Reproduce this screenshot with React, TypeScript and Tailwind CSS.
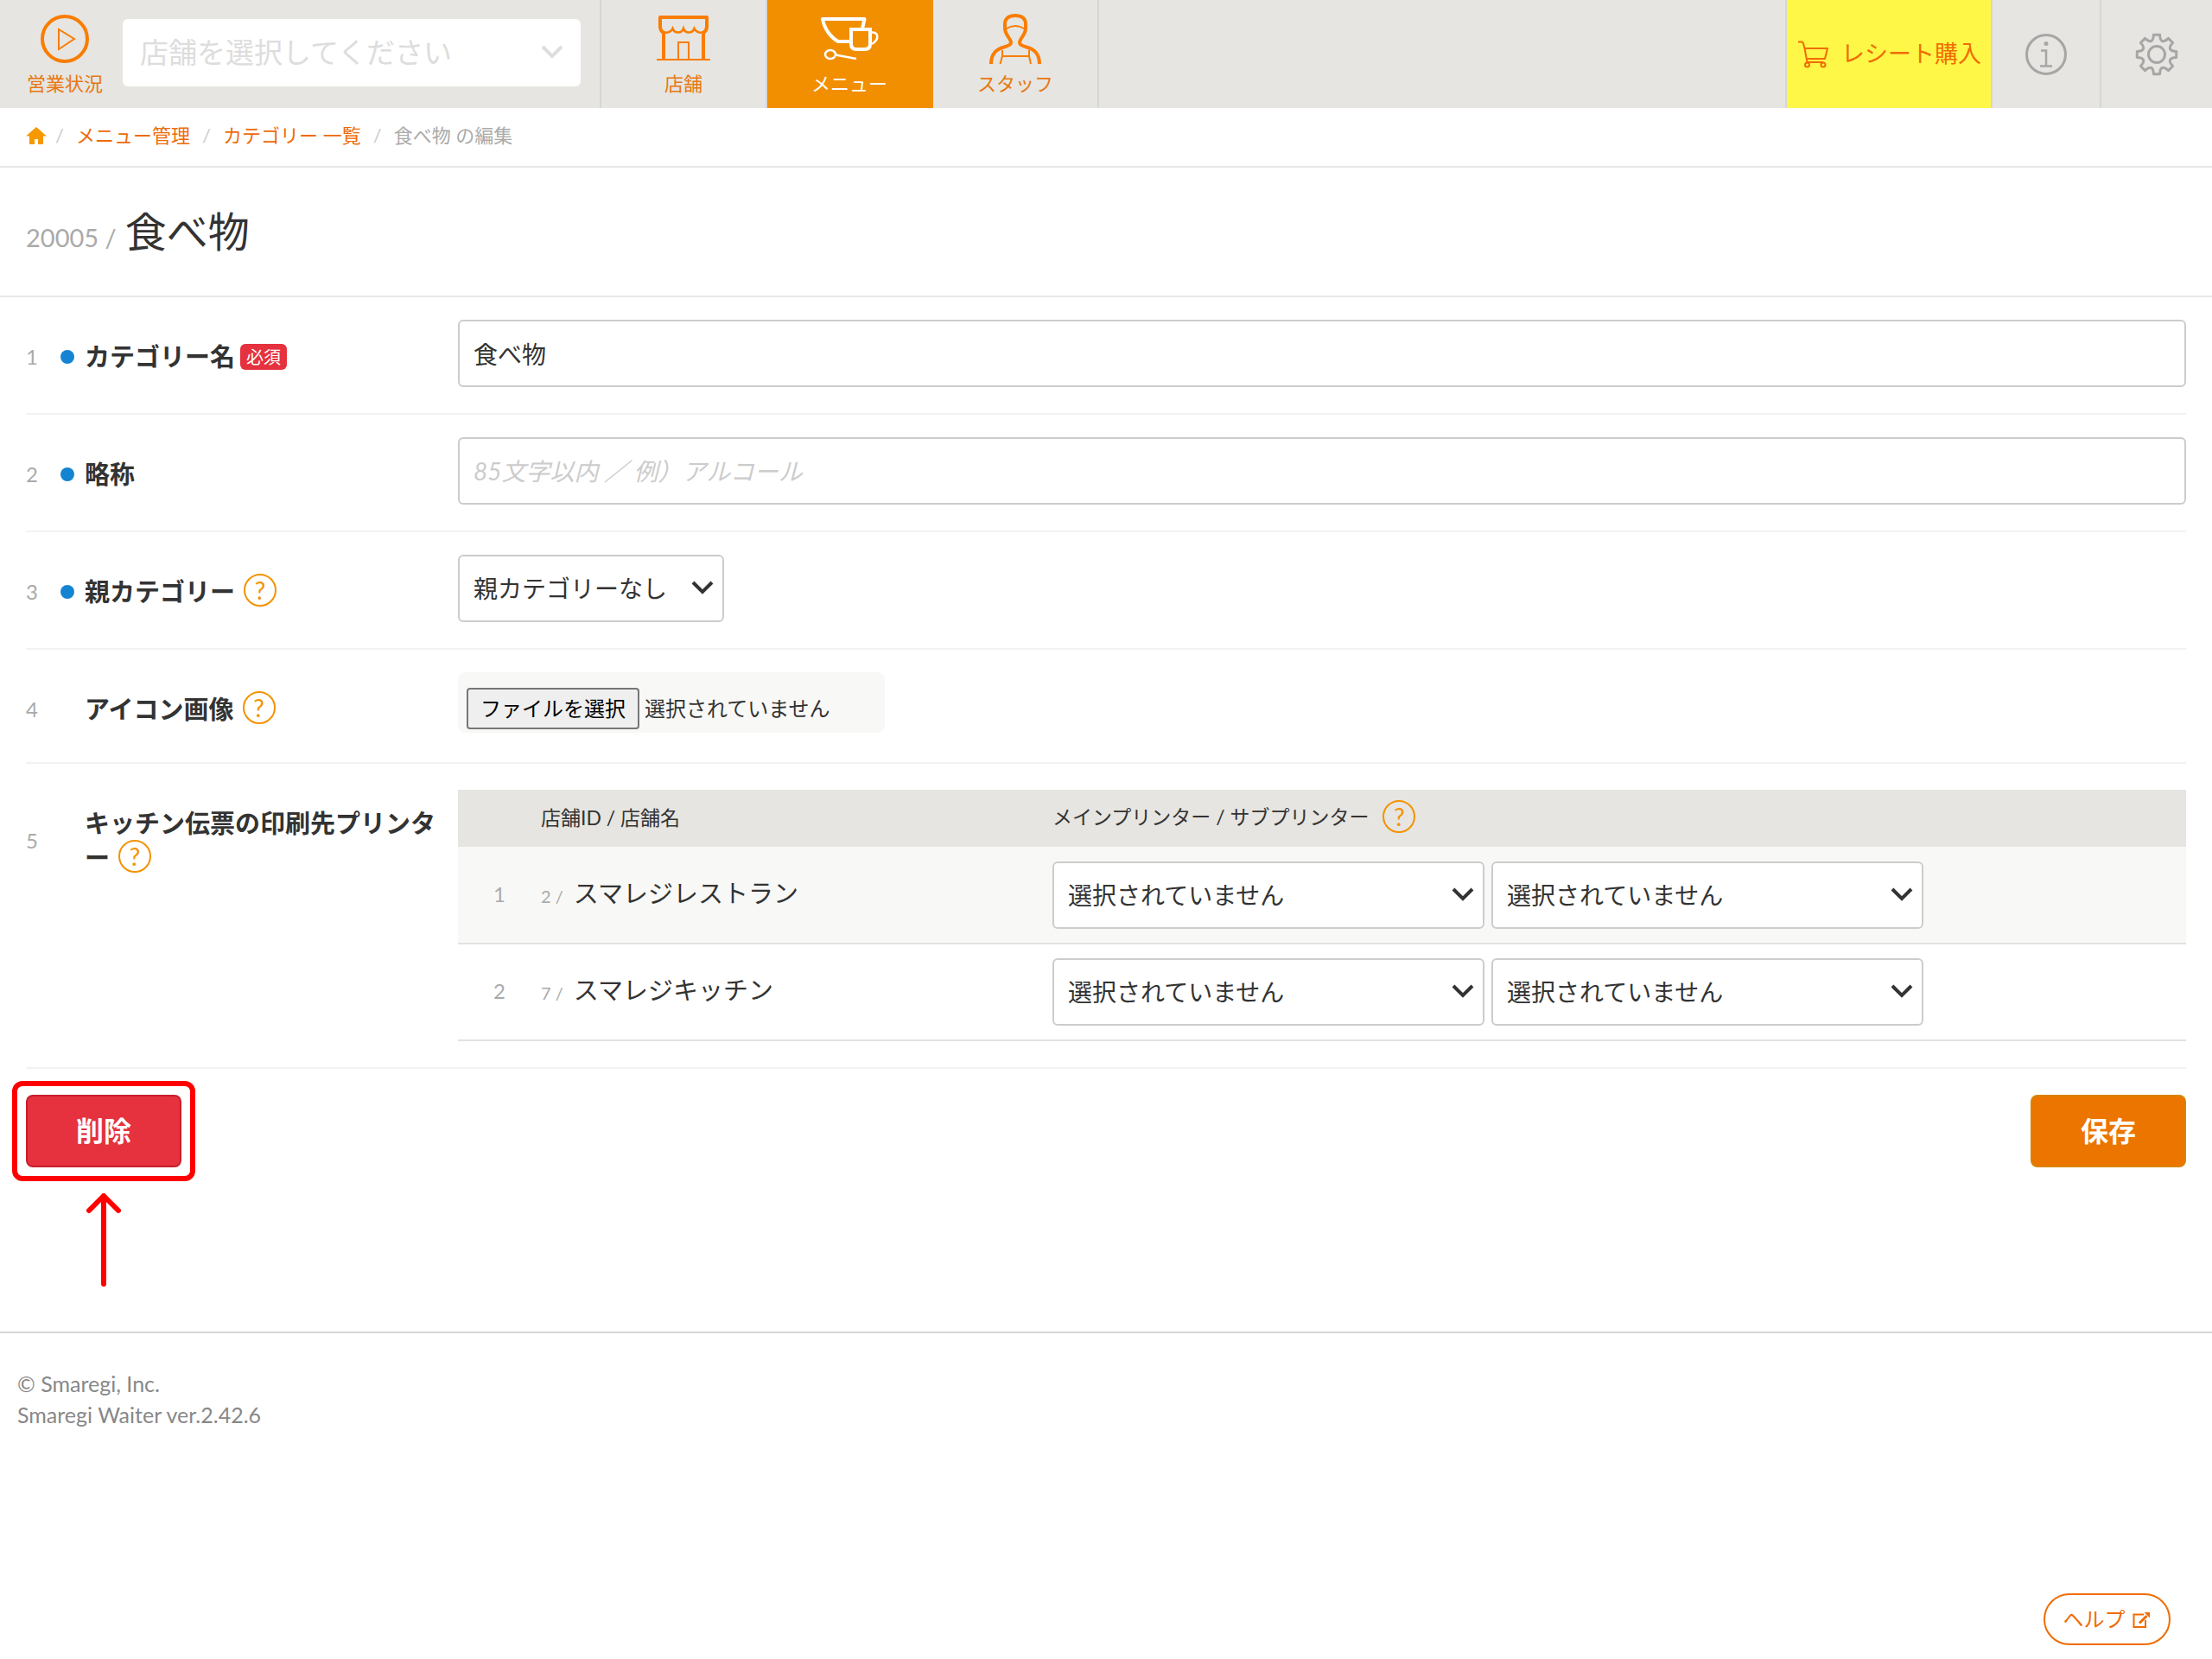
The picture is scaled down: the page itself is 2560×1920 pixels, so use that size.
import type { ReactNode } from "react"

const breadcrumbs = [
  { label: "メニュー管理", href: "#menu" },
  { label: "カテゴリー 一覧", href: "#categories" },
]

const stores = [
  { id: 2, name: "スマレジレストラン" },
  { id: 7, name: "スマレジキッチン" },
]

// Outline of an eight-tooth cog centred on the origin
const gearPath = () => {
  const point = (deg: number, r: number) => {
    const rad = ((deg - 90) * Math.PI) / 180
    return `${(r * Math.cos(rad)).toFixed(2)} ${(r * Math.sin(rad)).toFixed(2)}`
  }
  let d = `M${point(-9, 23)}`
  for (let k = 0; k < 8; k++) {
    const a = k * 45
    d += ` L${point(a + 9, 23)} C${point(a + 15, 15)} ${point(a + 30, 15)} ${point(a + 36, 23)}`
  }
  return d + "Z"
}

const PlayIcon = () => (
  <svg className="h-14 w-14" viewBox="0 0 56 56" fill="none" stroke="#f97d00" aria-hidden="true">
    <circle cx="28" cy="28" r="26" strokeWidth="4" />
    <path d="M21 17v23l18-12z" strokeWidth="2" />
  </svg>
)

const StoreIcon = () => (
  <svg className="h-[56px] w-[62px]" viewBox="0 0 62 56" fill="none" stroke="#f97d00" aria-hidden="true">
    <path d="M8 51V21C5 19 4 17 4 14V3h54v11c0 3-1 5-4 7v30" strokeWidth="4" strokeLinejoin="round" />
    <path d="M6 19c4 3 10 2 12.500-3 2 6 10.500 6 12.500 0 2 6 10.500 6 12.500 0 2.500 5 8.500 6 12.500 3" strokeWidth="2.500" />
    <path d="M0 52h62M25 52V32h12v20" strokeWidth="2" />
  </svg>
)

const MenuIcon = () => (
  <svg className="h-[56px] w-[72px]" viewBox="0 0 72 56" fill="none" stroke="#fff" aria-hidden="true">
    <path d="M38 31H23C14 26 7 16 5 5h48.500l-2.500 11" strokeWidth="4" strokeLinejoin="round" />
    <path d="M38 17h22v17c0 4-2 6-6 6H44c-4 0-6-2-6-6z" strokeWidth="4" />
    <path d="M61 20.500c9-1 10 8 1 13.500" strokeWidth="2.500" />
    <ellipse cx="14" cy="46" rx="6" ry="5" strokeWidth="2.500" />
    <path d="M20 46.500L44 51" strokeWidth="2.500" />
  </svg>
)

const StaffIcon = () => (
  <svg className="h-[60px] w-[62px]" viewBox="0 0 62 60" fill="none" stroke="#f97d00" aria-hidden="true">
    <path
      d="M3 59C3 47 9 42 18 39.500c6-2 10-3 7-8.500-3-5-6-8-6-13v-5C19 6 24 3 31 3s12 3 12 10v5c0 5-3 8-6 13-3 5.500 1 6.500 7 8.500 9 2.500 15 7.500 15 19.500"
      strokeWidth="4"
    />
    <path d="M20 18.500Q31 11.500 42 18.500M16 43v7l-2.500 9M47 43v7l2 9M16 50h31" strokeWidth="2" />
  </svg>
)

const CartIcon = () => (
  <svg className="h-[36px] w-[38px]" viewBox="0 0 38 36" fill="none" stroke="#f06c00" strokeWidth="2" strokeLinejoin="round" aria-hidden="true">
    <path d="M2 3.500h4.500L8 5l1.500 6H36l-3 12H11.500M9.500 11l3 16H31" />
    <circle cx="12.500" cy="30" r="2.500" />
    <circle cx="31" cy="30" r="2.500" />
  </svg>
)

const InfoIcon = () => (
  <svg className="h-[50px] w-[50px]" viewBox="-25 -25 50 50" fill="none" stroke="#a6a6a6" aria-hidden="true">
    <circle r="22.500" strokeWidth="3" />
    <circle cy="-12.500" r="2.500" fill="#a6a6a6" stroke="none" />
    <path d="M-6-4.500H0V13.500M-7 13.500H7" strokeWidth="2.500" />
  </svg>
)

const GearIcon = () => (
  <svg className="h-[50px] w-[50px]" viewBox="-25 -25 50 50" fill="none" stroke="#a6a6a6" strokeWidth="3" strokeLinejoin="round" aria-hidden="true">
    <path d={gearPath()} />
    <circle r="9.500" />
  </svg>
)

const HomeIcon = () => (
  <svg className="h-5 w-6" viewBox="0 0 24 20" fill="#f79800" aria-hidden="true">
    <path d="M12 0l12 10.500h-4V20h-6v-6h-4v6H4v-9.500H0z" />
  </svg>
)

const ExternalIcon = () => (
  <svg className="h-[22px] w-[24px]" viewBox="0 0 24 22" fill="none" stroke="#f06c00" strokeWidth="2" aria-hidden="true">
    <path d="M15 5.500H3.500V20H17v-8" />
    <path d="M10 15.500l8.500-8.500" strokeWidth="3" />
    <path d="M15.500 3H22v6.500z" fill="#f06c00" stroke="none" />
  </svg>
)

const HelpMark = ({ label }: { label: string }) => (
  <button
    type="button"
    aria-label={label}
    className="inline-flex h-[38px] w-[38px] shrink-0 items-center justify-center rounded-full border-2 border-[#f39200] align-middle text-[28px] leading-none font-normal text-[#f39200]"
  >
    ?
  </button>
)

const SelectBox = ({ id, label, option, width }: { id: string; label?: string; option: string; width: string }) => (
  <div className={`relative ${width}`}>
    <select
      id={id}
      aria-label={label}
      className="h-[78px] w-full appearance-none rounded-md border-2 border-[#ccc] bg-white pr-12 pl-4 text-[28px] text-[#333]"
    >
      <option>{option}</option>
    </select>
    <svg
      className="pointer-events-none absolute top-[30px] right-3 h-4 w-[26px]"
      viewBox="0 0 26 16"
      fill="none"
      stroke="#333"
      strokeWidth="4"
      aria-hidden="true"
    >
      <path d="M2 2l11 11L24 2" />
    </svg>
  </div>
)

const NavItem = ({ label, active, children }: { label: string; active?: boolean; children: ReactNode }) => (
  <a
    href="#"
    className={`flex w-48 flex-col items-center border-r-2 pt-[15px] ${
      active ? "border-[#f28f00] bg-[#f28f00] text-white" : "border-[#d6d6d6] text-[#e87710]"
    }`}
  >
    <span className="flex h-[60px] items-center">{children}</span>
    <span className="mt-[6px] text-[22px] leading-8">{label}</span>
  </a>
)

type FormRowProps = {
  no: number
  label: string
  htmlFor?: string
  dot?: boolean
  required?: boolean
  help?: boolean
  className: string
  children: ReactNode
}

const FormRow = ({ no, label, htmlFor, dot, required, help, className, children }: FormRowProps) => (
  <div className={`flex items-start border-b-2 border-[#f2f2f2] ${className}`}>
    <div className="flex w-[500px] shrink-0 items-center pt-[23px]">
      <span className="w-10 shrink-0 text-[24px] leading-10 text-[#aaa]">{no}</span>
      <span className="flex w-7 shrink-0 items-center">
        {dot && <span className="h-4 w-4 rounded-full bg-[#1484d2]" />}
      </span>
      <div className="w-[412px] text-[29px] leading-10 font-bold">
        <label htmlFor={htmlFor}>{label}</label>
        {required && (
          <span className="ml-[6px] inline-flex h-10 items-center align-top">
            <span className="rounded-md bg-[#e5323e] px-[7px] text-[20px] leading-[30px] font-normal text-white">
              必須
            </span>
          </span>
        )}
        {help && (
          <span className="ml-[10px] inline-flex h-9 items-center align-top">
            <HelpMark label={`${label}のヘルプ`} />
          </span>
        )}
      </div>
    </div>
    <div className="min-w-0 flex-1">{children}</div>
  </div>
)

export default function App() {
  return (
    <div lang="ja" className="bg-white font-['Lato','Noto_Sans_CJK_JP',sans-serif] text-[#333]">
      {/* Header */}
      <header className="flex h-[125px] bg-[#e6e5e1]">
        <a href="#" className="ml-[30px] flex w-[90px] flex-col items-center pt-[17px] text-[#e87710]">
          <PlayIcon />
          <span className="mt-2 text-[22px] leading-8 whitespace-nowrap">営業状況</span>
        </a>
        <div className="relative mt-[22px] mr-[22px] ml-[22px] h-[78px] w-[530px]">
          <select
            aria-label="店舗"
            className="h-full w-full appearance-none rounded-md bg-white pl-5 text-[33px] text-[#ddd]"
          >
            <option>店舗を選択してください</option>
          </select>
          <svg
            className="pointer-events-none absolute top-[30px] right-5 h-4 w-[26px]"
            viewBox="0 0 26 16"
            fill="none"
            stroke="#ddd"
            strokeWidth="4"
            aria-hidden="true"
          >
            <path d="M2 2l11 11L24 2" />
          </svg>
        </div>
        <nav className="flex border-l-2 border-[#d6d6d6]">
          <NavItem label="店舗">
            <StoreIcon />
          </NavItem>
          <NavItem label="メニュー" active>
            <MenuIcon />
          </NavItem>
          <NavItem label="スタッフ">
            <StaffIcon />
          </NavItem>
        </nav>
        <div className="ml-auto flex border-l-2 border-[#d6d6d6]">
          <a href="#" className="flex w-[236px] items-center gap-[14px] bg-[#fff748] pl-[11px] text-[27px] whitespace-nowrap text-[#f06c00]">
            <CartIcon />
            レシート購入
          </a>
          <button type="button" aria-label="お知らせ" className="flex w-[126px] items-center justify-center border-l-2 border-[#d6d6d6]">
            <InfoIcon />
          </button>
          <button type="button" aria-label="設定" className="flex w-[130px] items-center justify-center border-l-2 border-[#d6d6d6]">
            <GearIcon />
          </button>
        </div>
      </header>

      {/* Breadcrumb */}
      <nav aria-label="パンくず" className="flex h-[69px] items-center border-b-2 border-[#e8e8e8] px-[30px] pb-1 text-[22px] text-[#aaa]">
        <a href="#" aria-label="ホーム" className="mr-[10px]">
          <HomeIcon />
        </a>
        {breadcrumbs.map((crumb) => (
          <span key={crumb.href} className="mr-[14px] flex">
            <span className="w-6 text-[#ccc]">/</span>
            <a href={crumb.href} className="text-[#ee6a08]">
              {crumb.label}
            </a>
          </span>
        ))}
        <span className="w-6 text-[#ccc]">/</span>
        <span>食べ物 の編集</span>
      </nav>

      {/* Title */}
      <div className="flex h-[150px] items-center border-b-2 border-[#e8e8e8] px-[30px] pt-[6px]">
        <h1 className="text-[48px] leading-[72px]">
          <span className="mr-[10px] text-[29px] text-[#aaa]">20005 /</span>
          食べ物
        </h1>
      </div>

      {/* Form */}
      <form className="px-[30px]" onSubmit={(e) => e.preventDefault()}>
        <FormRow no={1} label="カテゴリー名" htmlFor="name" dot required className="pt-[26px] pb-[30px]">
          <input
            id="name"
            type="text"
            defaultValue="食べ物"
            className="block h-[78px] w-full rounded-md border-2 border-[#ccc] px-4 text-[28px]"
          />
        </FormRow>
        <FormRow no={2} label="略称" htmlFor="short-name" dot className="pt-[26px] pb-[30px]">
          <input
            id="short-name"
            type="text"
            placeholder="85文字以内 ／ 例）アルコール"
            className="block h-[78px] w-full rounded-md border-2 border-[#ccc] px-4 text-[28px] placeholder:text-[#ccc] placeholder:italic"
          />
        </FormRow>
        <FormRow no={3} label="親カテゴリー" htmlFor="parent" dot help className="pt-[26px] pb-[30px]">
          <SelectBox id="parent" option="親カテゴリーなし" width="w-[308px]" />
        </FormRow>
        <FormRow no={4} label="アイコン画像" htmlFor="icon" help className="pt-[26px] pb-[34px]">
          <div className="flex h-[70px] w-[494px] items-center rounded-lg bg-[#f8f8f6] pt-[14px] pl-[10px] text-[24px]">
            <input id="icon" type="file" className="sr-only" />
            <label
              htmlFor="icon"
              className="flex h-12 items-center rounded border-2 border-[#767676] bg-[#efefef] px-[14px] text-black"
            >
              ファイルを選択
            </label>
            <span className="ml-[6px]">選択されていません</span>
          </div>
        </FormRow>
        <FormRow no={5} label="キッチン伝票の印刷先プリンター" help className="pt-[26px] pb-[30px]">
          <table className="mt-1 w-full border-collapse text-left">
            <thead>
              <tr className="h-[66px] bg-[#e6e5e1] text-[23px]">
                <th className="w-24" aria-label="番号" />
                <th className="w-[592px] pb-[2px] font-normal">店舗ID / 店舗名</th>
                <th className="font-normal">
                  <div className="flex items-center gap-4 pb-1">
                    メインプリンター / サブプリンター
                    <HelpMark label="プリンターのヘルプ" />
                  </div>
                </th>
              </tr>
            </thead>
            <tbody>
              {stores.map((store, i) => (
                <tr key={store.id} className="h-28 border-b-2 border-[#e2e2e2] odd:bg-[#f8f8f6]">
                  <td className="pb-[2px] text-center text-[24px] text-[#aaa]">{i + 1}</td>
                  <td className="pb-1 text-[29px]">
                    <span className="mr-3 text-[20px] text-[#aaa]">{store.id} /</span>
                    {store.name}
                  </td>
                  <td>
                    <div className="flex gap-2">
                      <SelectBox
                        id={`main-${store.id}`}
                        label={`${store.name} メインプリンター`}
                        option="選択されていません"
                        width="w-[500px]"
                      />
                      <SelectBox
                        id={`sub-${store.id}`}
                        label={`${store.name} サブプリンター`}
                        option="選択されていません"
                        width="w-[500px]"
                      />
                    </div>
                  </td>
                </tr>
              ))}
            </tbody>
          </table>
        </FormRow>

        {/* Actions */}
        <div className="flex justify-between pt-[30px] pb-[190px] text-[32px] font-bold text-white">
          <div className="relative">
            <button type="button" className="h-[84px] w-[180px] rounded-lg border-2 border-[#c81e2c] bg-[#e5323e]">
              削除
            </button>
            <div className="pointer-events-none absolute -inset-4 rounded-xl border-[6px] border-[#f00]" />
            <svg
              className="pointer-events-none absolute top-[114px] left-[70px] h-[108px] w-10"
              viewBox="0 0 40 108"
              fill="none"
              stroke="#f00"
              strokeWidth="6"
              strokeLinecap="round"
              strokeLinejoin="round"
              aria-hidden="true"
            >
              <path d="M20 105V3M3 20L20 3l17 17" />
            </svg>
          </div>
          <button type="submit" className="h-[84px] w-[180px] rounded-lg border-2 border-[#d98200] bg-[#ec7500]">
            保存
          </button>
        </div>
      </form>

      {/* Footer */}
      <footer className="border-t-2 border-[#d6d6d6] px-5 py-10 text-[25px] leading-9 text-[#888]">
        <p>© Smaregi, Inc.</p>
        <p>Smaregi Waiter ver.2.42.6</p>
      </footer>

      <a
        href="#help"
        className="fixed right-12 bottom-4 flex h-[60px] w-[147px] items-center justify-center gap-[6px] rounded-full border-2 border-[#f06c00] bg-white text-[24px] text-[#f06c00]"
      >
        ヘルプ
        <ExternalIcon />
      </a>
    </div>
  )
}
